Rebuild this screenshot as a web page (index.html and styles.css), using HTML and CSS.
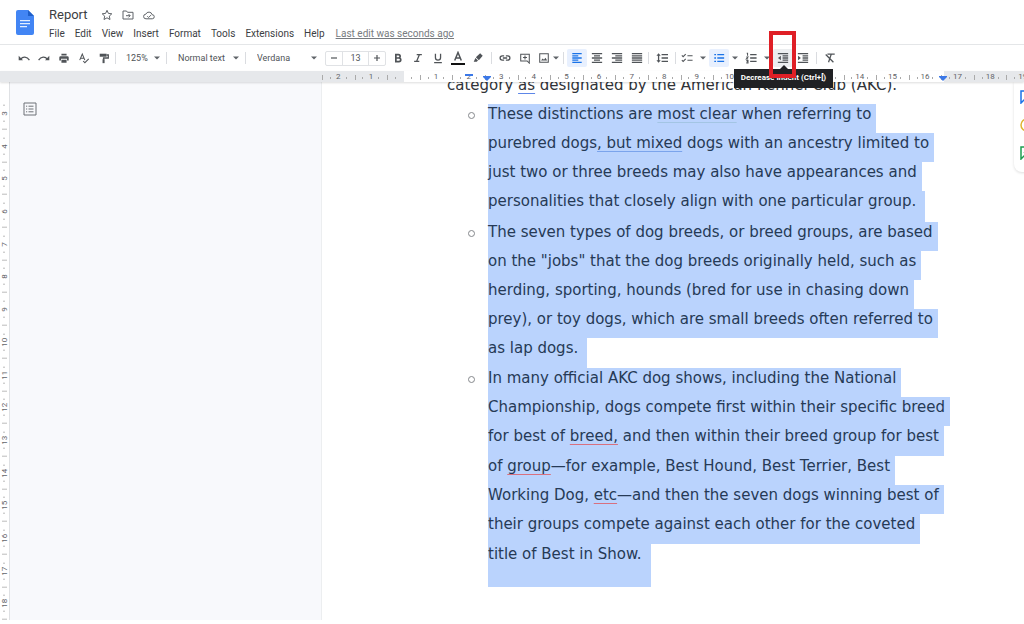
FILE: index.html
```
<!DOCTYPE html>
<html lang="en">
<head>
<meta charset="utf-8">
<title>Report</title>
<link rel="stylesheet" href="styles.css">
</head>
<body>
<header class="header">
  <svg class="logo" viewBox="0 0 18 25"><path fill="#4285f4" d="M2 0h10l6 6v17a2 2 0 0 1-2 2H2a2 2 0 0 1-2-2V2a2 2 0 0 1 2-2z"/><path fill="#1f5fc9" d="M12 0l6 6h-6z"/><path stroke="#e3eeff" stroke-width="1.3" d="M4 10.7h10M4 13.7h10M4 16.7h7"/></svg>
  <div class="heading">
    <div class="title-row">
      <h1 class="title">Report</h1>
      <button class="mini" aria-label="Star"><svg viewBox="0 0 12 12"><path d="M6 1.3l1.4 3.1 3.4.4-2.5 2.3.7 3.4L6 8.8l-3 1.7.7-3.4L1.200 4.800l3.400-.4z"/></svg></button>
      <button class="mini" aria-label="Move"><svg viewBox="0 0 12 12"><path d="M1 2h3.500l1 1.300H11V10H1zM4 6.700h4M6.500 5l1.700 1.700-1.700 1.700"/></svg></button>
      <button class="mini" aria-label="Document status"><svg viewBox="0 0 12 12"><path d="M3 9.800a2.300 2.300 0 0 1-.2-4.600 3.300 3.300 0 0 1 6.300.5 2.050 2.050 0 0 1 .2 4.100zM4.300 7.200l1.300 1.300 2.400-2.400"/></svg></button>
    </div>
    <nav class="menu">
      <button>File</button><button>Edit</button><button>View</button><button>Insert</button><button>Format</button><button>Tools</button><button>Extensions</button><button>Help</button>
      <a class="last-edit" href="#history">Last edit was seconds ago</a>
    </nav>
  </div>
</header>

<div class="toolbar" role="toolbar" aria-label="Formatting">
  <button class="tool" aria-label="Undo"><svg viewBox="0 0 14 14"><path class="line" d="M3 8.500C5.500 5 10.500 5 13.300 9.500"/><path d="M.8 4.500v5h5z"/></svg></button>
  <button class="tool" aria-label="Redo"><svg viewBox="0 0 14 14"><path class="line" d="M11 8.500C8.500 5 3.500 5 .7 9.500"/><path d="M13.200 4.500v5h-5z"/></svg></button>
  <button class="tool" aria-label="Print"><svg viewBox="0 0 14 14"><path d="M4 2h6v2H4zM3 5h8a1.500 1.500 0 0 1 1.500 1.500V10h-2V8h-7v2h-2V6.500A1.500 1.500 0 0 1 3 5zM4 9h6v3.500H4z"/></svg></button>
  <button class="tool" aria-label="Spelling check"><svg viewBox="0 0 14 14"><path class="thin" d="M2 9.500L5 2.500l3 7M3 7.200h4M6 10.500l2 2 4.500-4.500"/></svg></button>
  <button class="tool" aria-label="Paint format"><svg viewBox="0 0 14 14"><path d="M2 2h8v3.500H2z"/><path class="line" d="M10 3.500h2V7H6.500v2"/><path d="M5.300 8.500h2.400v4.500H5.300z"/></svg></button>
  <i class="sep"></i>
  <label class="pick pick-zoom"><select aria-label="Zoom"><option>125%</option></select><svg class="caret" viewBox="0 0 6 4"><path d="M0 .5h6l-3 3z"/></svg></label>
  <i class="sep"></i>
  <label class="pick pick-style"><select aria-label="Styles"><option>Normal text</option></select><svg class="caret" viewBox="0 0 6 4"><path d="M0 .5h6l-3 3z"/></svg></label>
  <i class="sep"></i>
  <label class="pick pick-font"><select aria-label="Font"><option>Verdana</option></select><svg class="caret" viewBox="0 0 6 4"><path d="M0 .5h6l-3 3z"/></svg></label>
  <div class="size">
    <button aria-label="Decrease font size"><svg viewBox="0 0 8 8"><path d="M1 4h6"/></svg></button>
    <input aria-label="Font size" value="13">
    <button aria-label="Increase font size"><svg viewBox="0 0 8 8"><path d="M1 4h6M4 1v6"/></svg></button>
  </div>
  <button class="tool" aria-label="Bold"><svg viewBox="0 0 14 14"><path class="bold" d="M4.500 3h3a2 2 0 0 1 0 4h-3zM4.500 7h3.600a2.100 2.100 0 0 1 0 4.200H4.500z"/></svg></button>
  <button class="tool" aria-label="Italic"><svg viewBox="0 0 14 14"><path class="line" d="M5.500 3h6M2.500 11h6M8.700 3l-3.400 8"/></svg></button>
  <button class="tool" aria-label="Underline"><svg viewBox="0 0 14 14"><path class="line" d="M4 2v4.500a3 3 0 0 0 6 0V2M2.500 12.300h9"/></svg></button>
  <button class="tool" aria-label="Text color"><svg class="large" viewBox="0 0 14 14"><path class="line" d="M3.700 9.500L7 1.500l3.300 8M4.800 7h4.400"/><path fill="#111" d="M0 12h14v2H0z"/></svg></button>
  <button class="tool" aria-label="Highlight color"><svg viewBox="0 0 14 14"><path d="M9.500 1.500l3 3-4.500 5-3.500-3.500zM4 7l3 3-1.500 1.500H2z"/></svg></button>
  <i class="sep wide"></i>
  <button class="tool" aria-label="Insert link"><svg viewBox="0 0 14 14"><path class="line" d="M6 4.500H3.800a2.500 2.500 0 0 0 0 5H6M8 4.500h2.200a2.500 2.500 0 0 1 0 5H8M4.500 7h5"/></svg></button>
  <button class="tool" aria-label="Add comment"><svg viewBox="0 0 14 14"><path class="thin" d="M2 2.500h10V13l-2.500-2.500H2zM7 4.200v4.600M4.700 6.500h4.600"/></svg></button>
  <button class="tool tight" aria-label="Insert image"><svg viewBox="0 0 14 14"><path class="thin" d="M2 2h10v10H2z"/><path d="M3.500 10l2-2.500L7 9l1.700-2.200 2 3.200z"/></svg></button>
  <button class="drop tight-drop" aria-label="Image options"><svg class="caret" viewBox="0 0 6 4"><path d="M0 .5h6l-3 3z"/></svg></button>
  <i class="sep wide"></i>
  <button class="tool on" aria-label="Left align"><svg viewBox="0 0 14 14"><path class="line" d="M1.500 2h11M1.500 4.500h7M1.500 7h11M1.500 9.500h7M1.500 12h11"/></svg></button>
  <button class="tool" aria-label="Center align"><svg viewBox="0 0 14 14"><path class="line" d="M1 2h12M3.500 4.500h7M1 7h12M3.500 9.500h7M1 12h12"/></svg></button>
  <button class="tool" aria-label="Right align"><svg viewBox="0 0 14 14"><path class="line" d="M1 2h12M5 4.500h8M1 7h12M5 9.500h8M1 12h12"/></svg></button>
  <button class="tool" aria-label="Justify"><svg viewBox="0 0 14 14"><path class="line" d="M1 2h12M1 4.500h12M1 7h12M1 9.500h12M1 12h12"/></svg></button>
  <i class="sep"></i>
  <button class="tool roomy" aria-label="Line spacing"><svg viewBox="0 0 14 14"><path class="line" d="M6.500 3H14M6.500 7H14M6.500 11H14M3 3.500v7"/><path d="M.5 4.500L3 1.500l2.500 3zM.5 9.500L3 12.500l2.500-3z"/></svg></button>
  <i class="sep"></i>
  <button class="tool" aria-label="Checklist"><svg viewBox="0 0 14 14"><path class="thin" d="M1 4l1.500 1.500L5.500 2.500M1 9.500L2.500 11l3-3M7.500 4.500H13.500M7.500 9.500H13.500"/></svg></button>
  <button class="drop" aria-label="Checklist menu"><svg class="caret" viewBox="0 0 6 4"><path d="M0 .5h6l-3 3z"/></svg></button>
  <button class="tool on" aria-label="Bulleted list"><svg viewBox="0 0 14 14"><path class="line" d="M5 3h8M5 7h8M5 11h8M1.500 3h2M1.500 7h2M1.500 11h2"/></svg></button>
  <button class="drop" aria-label="Bulleted list menu"><svg class="caret" viewBox="0 0 6 4"><path d="M0 .5h6l-3 3z"/></svg></button>
  <button class="tool" aria-label="Numbered list"><svg viewBox="0 0 14 14"><path class="line" d="M6 3h7.500M6 7h7.500M6 11h7.500"/><path class="thin" d="M2 1.500h1v3M1.500 5.800h2l-2 2.400h2.200M1.500 9.800h2v2.900h-2M2 11.200h1.500"/></svg></button>
  <button class="drop" aria-label="Numbered list menu"><svg class="caret" viewBox="0 0 6 4"><path d="M0 .5h6l-3 3z"/></svg></button>
  <div class="hinted">
    <button class="tool hover" aria-label="Decrease indent" aria-describedby="hint"><svg viewBox="0 0 14 14"><path class="line" d="M1 2h12M6.500 4.500H13M6.500 7H13M6.500 9.500H13M1 12h12"/><path d="M4.500 4.500v5L1.200 7z"/></svg></button>
    <div class="hint" id="hint" role="tooltip">Decrease indent (Ctrl+[)</div>
    <div class="callout"></div>
  </div>
  <button class="tool" aria-label="Increase indent"><svg viewBox="0 0 14 14"><path class="line" d="M1 2h12M6.500 4.500H13M6.500 7H13M6.500 9.500H13M1 12h12"/><path d="M1.200 4.500v5L4.500 7z"/></svg></button>
  <i class="sep wide"></i>
  <button class="tool" aria-label="Clear formatting"><svg viewBox="0 0 14 14"><path class="line" d="M4 2.500h8.500M8.500 2.500L5.300 12M2 3l9 9"/></svg></button>
</div>

<div class="ruler">
  <div class="scale">
    <span>2</span><span>1</span><span></span><span>1</span><span>2</span><span>3</span><span>4</span><span>5</span><span>6</span><span>7</span><span>8</span><span>9</span><span>10</span><span>11</span><span>12</span><span>13</span><span>14</span><span>15</span><span>16</span><span>17</span><span>18</span><span>19</span>
    <svg class="stop first" viewBox="0 0 8 8"><path d="M0 1h8v2H0z"/></svg>
    <svg class="stop left" viewBox="0 0 8 8"><path d="M0 3h8v1L4 8 0 4z"/></svg>
    <svg class="stop right" viewBox="0 0 8 8"><path d="M0 3h8v1L4 8 0 4z"/></svg>
  </div>
</div>

<div class="workspace">
  <div class="v-ruler">
    <span>3</span><span>4</span><span>5</span><span>6</span><span>7</span><span>8</span><span>9</span><span>10</span><span>11</span><span>12</span><span>13</span><span>14</span><span>15</span><span>16</span><span>17</span><span>18</span>
  </div>
  <aside class="outline">
    <button class="outline-toggle" aria-label="Show document outline"><svg viewBox="0 0 14 14"><path d="M1 1h12v12H1zM5.500 4.200h5M5.500 7h5M5.500 9.800h5M3 4.200h1.200M3 7h1.200M3 9.800h1.200"/></svg></button>
  </aside>
  <main class="page">
    <p class="lead">category <u class="style-hint">as</u> designated by the American Kennel Club (AKC).</p>
    <ul class="points">
      <li><i class="ring"></i><div class="body">
        <span>These distinctions are <u class="soft">most clear</u> when referring to</span>
        <span>purebred dogs<u class="grammar">, but mixed</u> dogs with an ancestry limited to</span>
        <span>just two or three breeds may also have appearances and</span>
        <span>personalities that closely align with one particular group.</span>
      </div></li>
      <li><i class="ring"></i><div class="body">
        <span>The seven types of dog breeds, or breed groups, are based</span>
        <span>on the "jobs" that the dog breeds originally held, such as</span>
        <span>herding, sporting, hounds (bred for use in chasing down</span>
        <span>prey), or toy dogs, which are small breeds often referred to</span>
        <span>as lap dogs.</span>
      </div></li>
      <li><i class="ring"></i><div class="body">
        <span>In many official AKC dog shows, including the National</span>
        <span>Championship, dogs compete first within their specific breed</span>
        <span>for best of <u class="spell">breed,</u> and then within their breed group for best</span>
        <span>of <u class="spell">group</u>—for example, Best Hound, Best Terrier, Best</span>
        <span>Working Dog, <u class="spell">etc</u>—and then the seven dogs winning best of</span>
        <span>their groups compete against each other for the coveted</span>
        <span>title of Best in Show.</span>
      </div></li>
    </ul>
  </main>
  <aside class="suggest">
    <button aria-label="Add comment"><svg viewBox="0 0 14 14"><path stroke="#1a73e8" d="M1 1h12v9H4l-3 3z"/></svg></button>
    <button aria-label="Add emoji reaction"><svg viewBox="0 0 14 14"><circle stroke="#e0b530" cx="7" cy="7" r="6"/></svg></button>
    <button aria-label="Suggest edits"><svg viewBox="0 0 14 14"><path stroke="#1e9e50" d="M1 1h12v9H4l-3 3zM4 7l4-4"/></svg></button>
  </aside>
</div>
</body>
</html>
```
FILE: styles.css
```
* { box-sizing: border-box; }
body {
  margin: 0;
  min-height: 100vh;
  display: flex;
  flex-direction: column;
  padding-bottom: 4px;
  background: #fff;
  color: #3c4043;
  font-family: Roboto, "Liberation Sans", sans-serif;
  font-size: 10px;
  overflow: hidden;
}
button { border: 0; padding: 0; background: none; color: inherit; font: inherit; }
svg { display: block; }

.header {
  display: flex;
  gap: 15px;
  height: 45px;
  padding: 6px 16px 0;
  border-bottom: 1px solid #e4e6e8;
}
.logo { width: 18px; height: 25px; margin-top: 4px; }
.title-row { display: flex; align-items: center; gap: 9px; height: 17px; }
.title { margin: 0 4px 0 0; font-size: 13px; font-weight: 400; line-height: 16px; }
.mini svg { width: 12px; height: 12px; fill: none; stroke: #5f6368; stroke-width: 1; }
.menu { display: flex; gap: 10px; margin-top: 4px; line-height: 14px; white-space: nowrap; }
.last-edit { margin-left: 1px; color: #777b80; }

.toolbar { display: flex; align-items: center; height: 26px; padding-left: 14px; color: #505458; }
.tool { flex: none; display: grid; place-items: center; width: 20px; height: 18px; border-radius: 2px; }
.tool svg { width: 12px; height: 12px; fill: currentColor; }
.tool svg.large { width: 14px; height: 14px; }
.tool .line, .tool .thin, .tool .bold { fill: none; stroke: currentColor; stroke-width: 1.500; }
.tool .thin { stroke-width: 1.200; }
.tool .bold { stroke-width: 2; }
.tool.tight { width: 17px; }
.tool.roomy { width: 24px; }
.tool.on { background: #e8f0fe; color: #1a73e8; }
.tool.hover { background: #eceef0; }
.drop { flex: none; display: grid; place-items: center; width: 12px; height: 18px; }
.tight-drop { width: 8px; }
.caret { width: 6px; height: 4px; fill: #5f6368; }
.sep { flex: none; width: 1px; height: 12px; margin: 0 1px; background: #dadce0; }
.sep.wide { margin: 0 3px; }

.pick { flex: none; display: flex; align-items: center; padding: 0 5px 0 10px; }
.pick select {
  flex: 1;
  min-width: 0;
  padding: 0;
  border: 0;
  appearance: none;
  background: none;
  color: inherit;
  font: 9px Roboto, sans-serif;
}
.pick-zoom { width: 48px; padding-left: 9px; }
.pick-style { width: 76px; }
.pick-font { width: 78px; padding-right: 8px; }
.size { flex: none; display: flex; height: 15px; margin-right: 2px; border: 1px solid #e0e2e5; border-radius: 2px; }
.size button { display: grid; place-items: center; width: 16px; }
.size svg { width: 8px; height: 8px; stroke: #505458; stroke-width: 1.200; }
.size input {
  width: 27px;
  padding: 0;
  border: solid #e0e2e5;
  border-width: 0 1px;
  color: inherit;
  font: 9px Roboto, sans-serif;
  text-align: center;
}

.hinted { position: relative; flex: none; }
.hint {
  position: absolute;
  z-index: 3;
  top: 20px;
  left: -39px;
  width: 99px;
  height: 19px;
  background: #202124;
  color: #fff;
  font-size: 8px;
  font-weight: 700;
  line-height: 18px;
  text-align: center;
  white-space: nowrap;
}
.hint::before {
  content: "";
  position: absolute;
  top: -4px;
  left: 46px;
  border: solid transparent;
  border-width: 0 4px 4px;
  border-bottom-color: #202124;
}
.callout { position: absolute; z-index: 4; top: -18px; left: -4px; width: 27px; height: 47px; border: 4px solid #df1f26; }

.ruler { position: relative; z-index: 1; flex: none; height: 11px; padding-left: 322px; background: #e6e8eb; box-shadow: 0 1px 2px #0002; }
.scale {
  position: relative;
  display: flex;
  height: 11px;
  margin-right: -15px;
  background: linear-gradient(90deg, #e6e8eb 11.400%, #fff 11.400% 86.800%, #e6e8eb 86.800%);
}
.scale span {
  flex: 1 1 0;
  color: #5f6368;
  font-size: 8px;
  line-height: 12px;
  text-align: center;
  background:
    linear-gradient(#aaa, #aaa) 0 4px / 1px 5px no-repeat,
    linear-gradient(#aaa, #aaa) 25% 6px / 1px 2px no-repeat,
    linear-gradient(#aaa, #aaa) 75% 6px / 1px 2px no-repeat;
}
.stop { position: absolute; top: 2px; width: 8px; height: 8px; fill: #3b78e7; }
.stop.first { left: 20%; }
.stop.left { left: 22.500%; }
.stop.right { left: 86%; }

.workspace { position: relative; flex: 1; display: flex; overflow: hidden; }
.v-ruler { flex: none; display: flex; flex-direction: column; width: 10px; padding-top: 15px; border-right: 1px solid #dfe1e4; }
.v-ruler span {
  flex: 1 1 0;
  writing-mode: vertical-rl;
  transform: rotate(180deg);
  color: #5f6368;
  font-size: 8px;
  line-height: 9px;
  text-align: center;
  background:
    linear-gradient(#bbb, #bbb) 2px 0 / 5px 1px no-repeat,
    linear-gradient(#bbb, #bbb) 4px 25% / 2px 1px no-repeat,
    linear-gradient(#bbb, #bbb) 4px 75% / 2px 1px no-repeat;
}
.outline { flex: none; width: 312px; padding: 20px 13px; border-right: 1px solid #eceef0; background: #f8f9fc; }
.outline-toggle svg { width: 14px; height: 14px; fill: none; stroke: #6d7176; stroke-width: 1; }

.page {
  flex: 1;
  min-width: 0;
  padding-left: 125px;
  color: #303338;
  font-family: "DejaVu Sans", sans-serif;
  font-size: 15px;
  line-height: 21px;
  white-space: nowrap;
}
.lead { height: 29px; margin: -7px 0 0; }
.points { margin: 0; padding: 0; list-style: none; }
.points li { display: flex; }
.ring { flex: none; width: 7px; height: 7px; margin: 8px 13px 0 21px; border: 1px solid #85888c; border-radius: 50%; }
.body { color: #263a56; }
.body span { display: block; width: fit-content; padding: 0 5px 8px 0; background: #bad3fd; }
.body span:last-child { padding-right: 9px; padding-bottom: 9px; }
.points li:first-child span:last-child { padding-bottom: 10px; }
.points li:last-child span:nth-child(3n) { padding-bottom: 9px; }
.points li:last-child span:last-child { padding-bottom: 22px; }
u { text-decoration-thickness: 1px; text-underline-offset: 3px; text-decoration-skip-ink: none; }
.style-hint { text-decoration-color: #5d86e8; }
.soft { text-decoration-color: #a3c5e4; }
.grammar { text-decoration-color: #7ba4ec; }
.spell { text-decoration-color: #d8707f; }

.suggest {
  position: absolute;
  top: 0;
  right: -20px;
  display: grid;
  gap: 14px;
  width: 30px;
  padding: 8px 6px 12px;
  border-radius: 0 0 8px 8px;
  background: #fff;
  box-shadow: 0 1px 3px #0002;
}
.suggest svg { width: 14px; height: 14px; fill: none; stroke-width: 1.500; }
```
